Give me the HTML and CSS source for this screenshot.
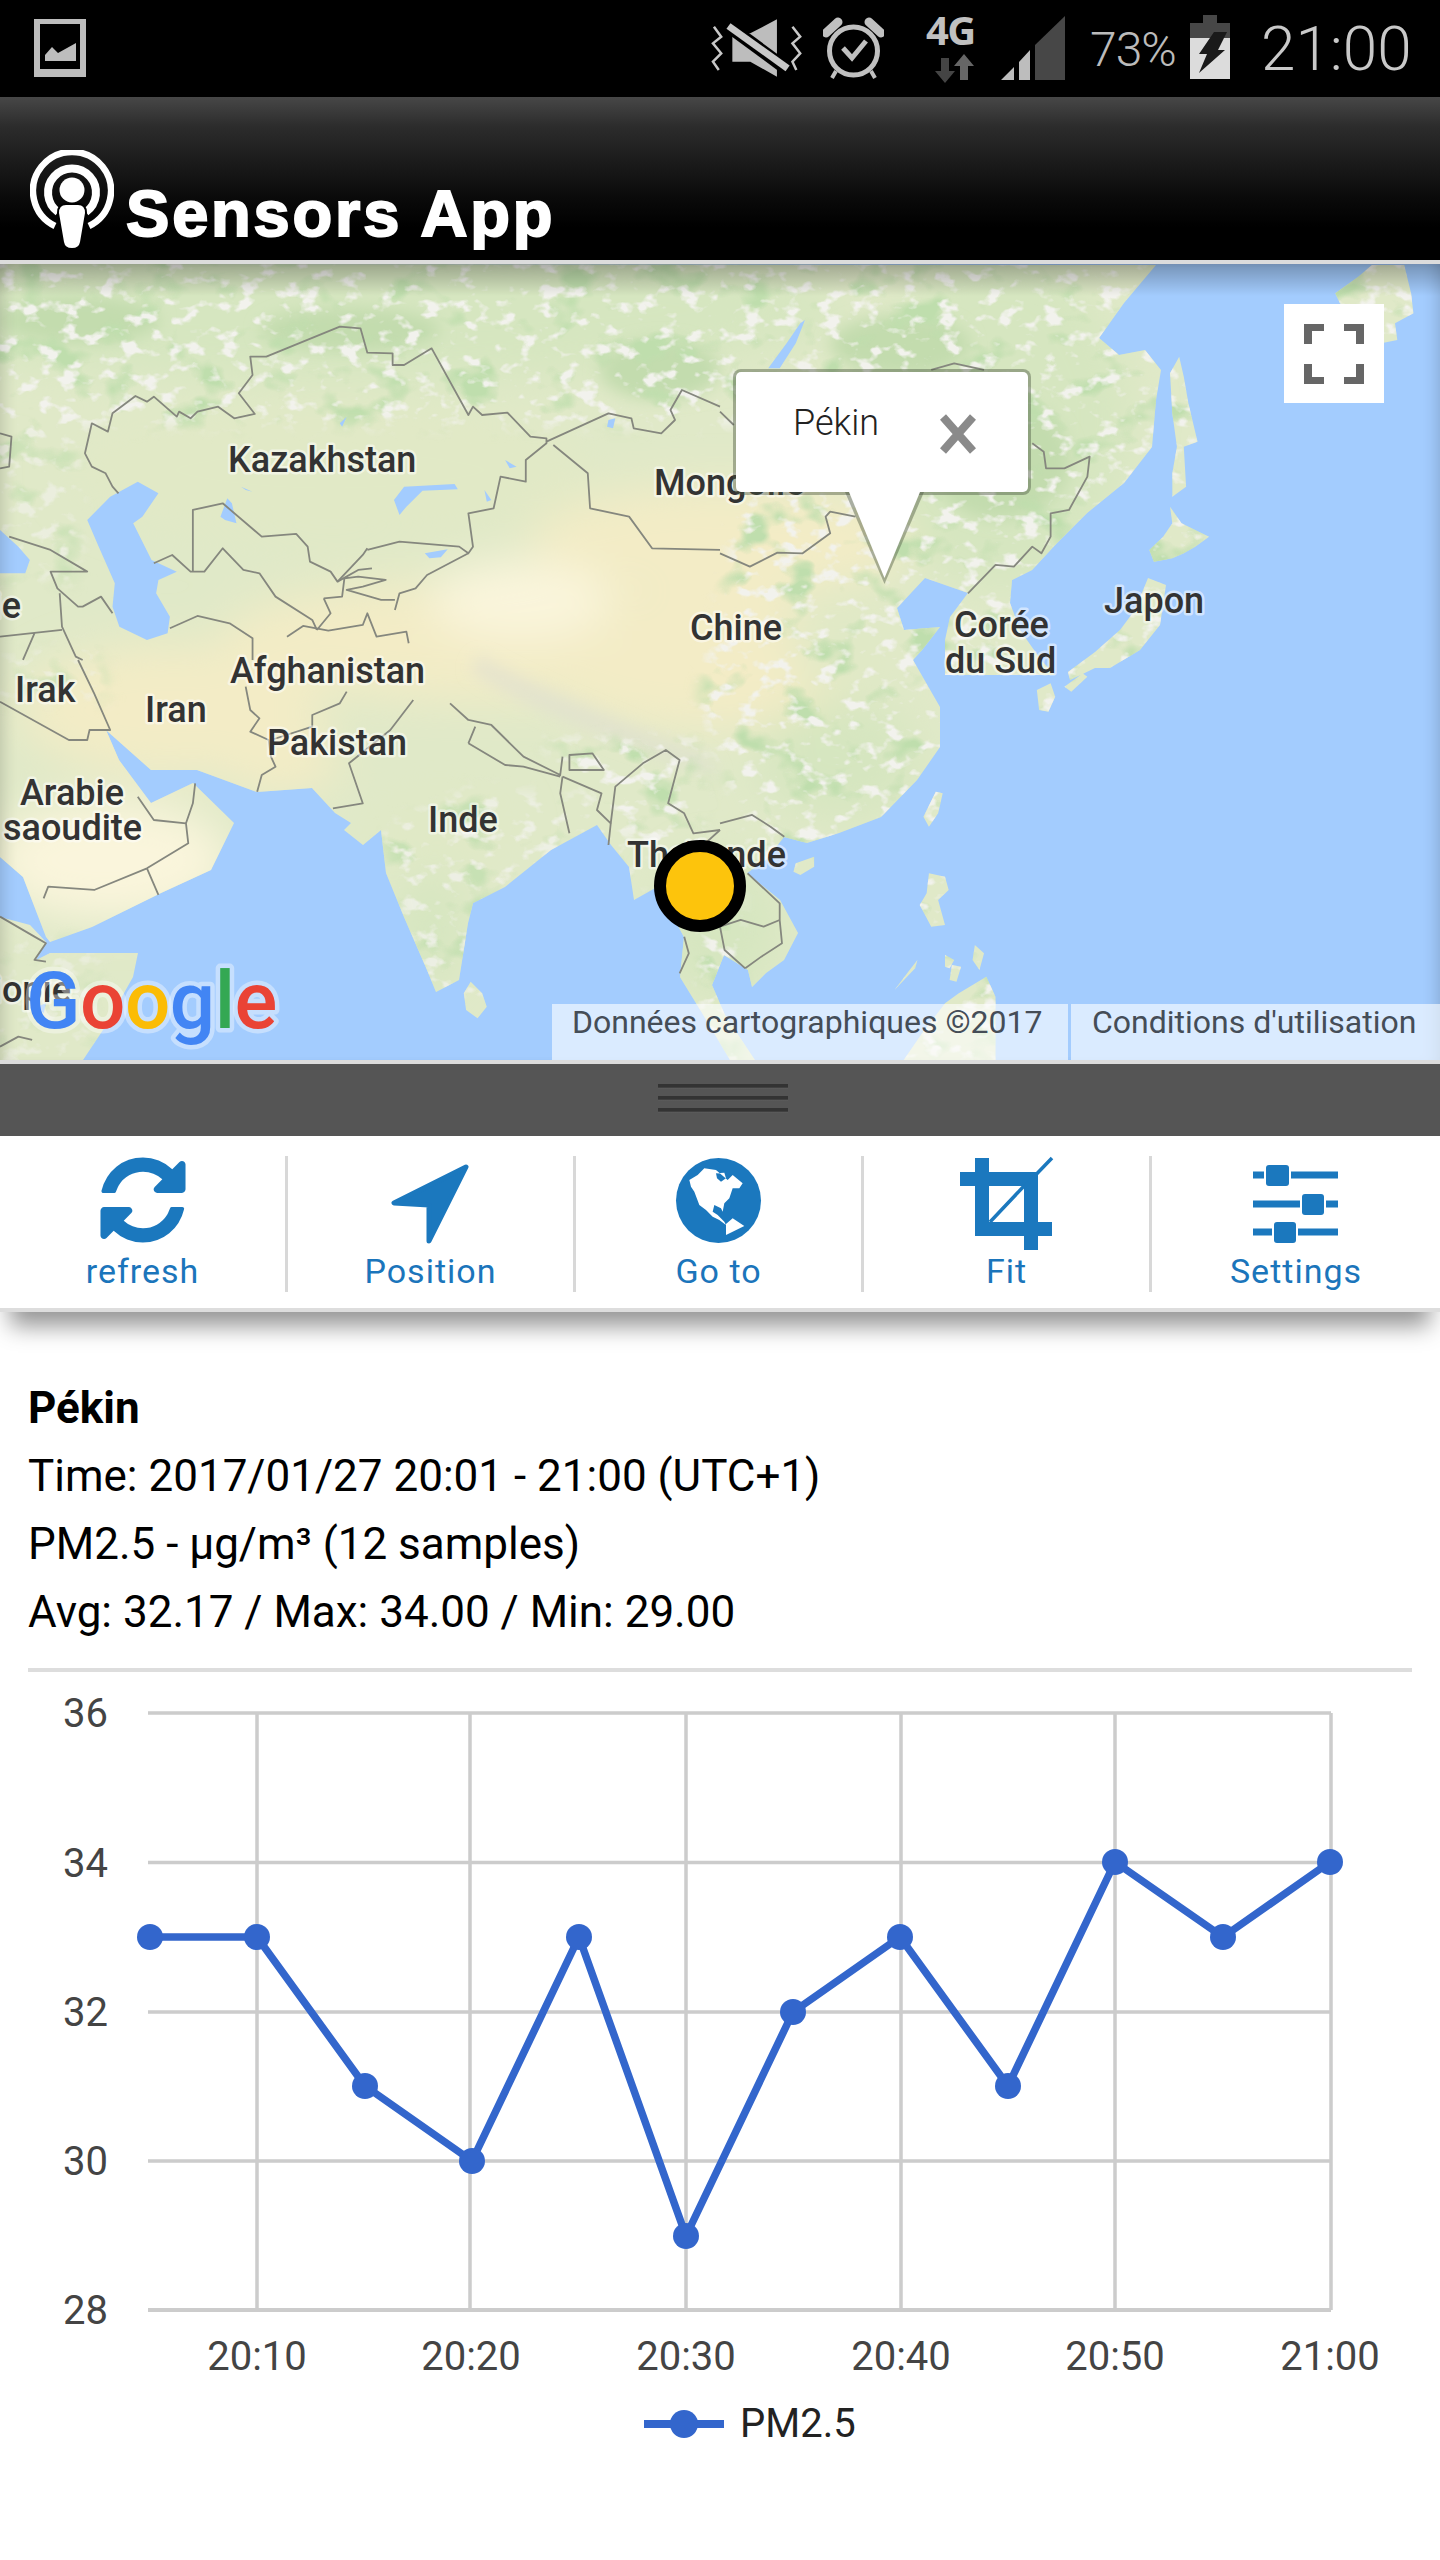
FILE: index.html
```html
<!DOCTYPE html>
<html lang="en">
<head>
<meta charset="utf-8">
<title>Sensors App</title>
<link rel="stylesheet" href="styles.css">
</head>
<body>
<div class="page">

<header class="statusbar">
  <svg class="st-gallery" viewBox="34 19 52 58" aria-hidden="true">
    <path class="st-fill" fill-rule="evenodd" d="M34 19H86V77H34ZM40 24V69H80V24Z"/>
    <path class="st-fill" d="M45 61V55L52 47L58 53L76 43V61Z"/>
  </svg>
  <div class="st-right">
    <svg class="st-mute" viewBox="711 15 93 65" aria-hidden="true">
      <g transform="translate(680,0) scale(.4847,.3333)">
        <path class="st-fill" d="M108 100H145L200 58V230L145 185H108Z"/>
        <path class="st-gap" d="M85 62L225 212"/>
        <path class="st-slash" d="M100 78L222 205"/>
        <path class="st-wave" d="M70 80L85 110L68 130L85 160L68 185L80 210"/>
        <path class="st-wave" d="M232 80L248 110L232 130L248 160L232 185L240 210"/>
      </g>
    </svg>
    <svg class="st-alarm" viewBox="823 15 61 66" aria-hidden="true">
      <circle class="st-ring" cx="853.5" cy="51" r="24"/>
      <path class="st-ear" d="M826 33L838 22M869 22L881 33"/>
      <path class="st-leg" d="M836 71L832 78M871 71L875 78"/>
      <path class="st-check" d="M843 48L852 58L866 41"/>
    </svg>
    <svg class="st-net" viewBox="927 15 52 70" aria-hidden="true">
      <text class="st-4g" x="926" y="45">4G</text>
      <path class="st-down" d="M941 58H949V71H955L945 83L935 71H941Z"/>
      <path class="st-up" d="M960 80H968V66H974L964 54L954 66H960Z"/>
    </svg>
    <svg class="st-signal" viewBox="1001 15 64 66" aria-hidden="true">
      <path class="st-fill" d="M1001 80L1014 67V80ZM1019 80V62L1030 50V80Z"/>
      <path class="st-dim" d="M1035 80V45L1065 16V80Z"/>
    </svg>
    <span class="st-pct">73%</span>
    <svg class="st-battery" viewBox="1190 15 40 65" aria-hidden="true">
      <path class="st-dim" d="M1203 15H1217V23H1230V38H1190V23H1203Z"/>
      <rect class="st-bright" x="1190" y="38" width="40" height="41"/>
      <path class="st-bolt" d="M1214 32H1227L1218 50H1225L1199 73L1207 54H1199Z"/>
    </svg>
    <span class="st-time">21:00</span>
  </div>
</header>

<div class="appbar">
  <svg class="app-logo" viewBox="30 150 84 98" aria-hidden="true">
    <path class="logo-ring logo-outer" d="M55 226A39 39 0 1 1 89 226"/>
    <path class="logo-ring logo-inner" d="M58 212A24 24 0 1 1 86 212"/>
    <circle class="logo-solid" cx="72" cy="190" r="12.5"/>
    <path class="logo-solid logo-body" d="M66 205H78Q85 205 85 213L80 242Q79 248 72 248Q65 248 64 242L59 213Q59 205 66 205Z"/>
  </svg>
  <h1 class="app-title">Sensors App</h1>
</div>

<section class="map">
  <svg class="map-canvas" viewBox="0 264 1440 796" aria-label="Map of Asia">
    <defs>
      <filter id="soft" x="-20%" y="-20%" width="140%" height="140%"><feGaussianBlur stdDeviation="22"/></filter>
      <filter id="softer" x="-20%" y="-20%" width="140%" height="140%"><feGaussianBlur stdDeviation="8"/></filter>
      <filter id="speck" x="0" y="0" width="100%" height="100%" color-interpolation-filters="sRGB">
        <feTurbulence type="fractalNoise" baseFrequency="0.05 0.07" numOctaves="3" seed="7"/>
        <feColorMatrix values="0 0 0 0 .95  0 0 0 0 .95  0 0 0 0 .93  6 0 0 0 -3.3"/>
      </filter>
      <filter id="speckg" x="0" y="0" width="100%" height="100%" color-interpolation-filters="sRGB">
        <feTurbulence type="fractalNoise" baseFrequency="0.022 0.03" numOctaves="3" seed="21"/>
        <feColorMatrix values="0 0 0 0 .75  0 0 0 0 .87  0 0 0 0 .68  0 5 0 0 -2.8"/>
      </filter>
      <clipPath id="landclip">
        <path id="mainland" d="M0 264L1156 265L1124 303L1099 338L1119 355L1145 350L1161 370L1156 400L1152 447L1124 483L1087 513L1057 543L1032 570L1012 580L1010 603L1020 630L1041 660L1055 675L945 675L945 640L950 617L968 593L925 578L897 608L904 630L940 627L922 650L913 660L917 667L940 707L940 747L917 780L881 817L839 833L807 843L784 837L766 860L747 873L780 900L798 933L784 960L766 973L752 987L748 970L724 955L712 985L725 1015L755 1060L730 1060L702 1013L680 977L684 937L657 887L634 900L629 867L611 845L597 825L551 850L505 887L473 903L468 923L459 980L436 992L427 970L404 917L386 873L381 830L363 845L344 830L351 823L335 813L312 788L257 792L197 770L151 770L106 730L119 760L151 803L193 783L234 823L211 870L161 893L92 927L50 942L46 937L23 877L0 857Z"/>
        <path d="M0 917L30 925L46 942L36 960L50 953L138 953L133 977L105 1027L83 1060L0 1060Z"/>
        <path transform="translate(720,260) scale(.4592,.3333)" d="M1000 290L1010 350L1020 430L1040 545L1010 560L1015 680L985 710L985 640L995 560L985 460L980 340Z"/>
        <path transform="translate(720,260) scale(.4592,.3333)" d="M980 740L1005 790L1065 830L1035 860L1010 880L985 895L945 905L935 870L965 830L985 790Z"/>
        <path transform="translate(720,260) scale(.4592,.3333)" d="M1420 15L1490 15L1505 100L1510 160L1470 190L1475 240L1440 250L1420 200L1350 130L1340 100L1390 50Z"/>
        <path d="M1148 578L1166 585L1160 625L1140 650L1110 668L1095 668L1070 680L1068 672L1095 652L1120 630L1135 610Z"/>
        <path transform="translate(720,660) scale(.4592,.3333)" d="M690 90L720 70L730 110L715 155L695 150Z"/>
        <path transform="translate(720,660) scale(.4592,.3333)" d="M750 80L790 40L800 50L765 95Z"/>
        <path transform="translate(720,660) scale(.4592,.3333)" d="M470 395L485 400L475 460L455 500L443 470Z"/>
        <path transform="translate(720,660) scale(.4592,.3333)" d="M165 610L205 590L205 620L175 645L160 635Z"/>
        <path transform="translate(720,660) scale(.4592,.3333)" d="M455 640L490 650L498 690L475 720L490 795L460 800L435 735L450 700Z"/>
        <path transform="translate(720,660) scale(.4592,.3333)" d="M490 885L510 900L500 925L490 920ZM555 855L575 880L565 930L550 900ZM505 915L525 920L515 965L500 960Z"/>
        <path transform="translate(720,660) scale(.4592,.3333)" d="M430 900L425 925L380 990L410 935Z"/>
        <path transform="translate(720,660) scale(.4592,.3333)" d="M490 1030L520 1000L580 950L600 1010L600 1200L400 1200L440 1120Z"/>
        <path transform="translate(0,660) scale(.4592,.3333)" d="M1025 965L1050 1000L1060 1040L1040 1075L1015 1050L1010 1000Z"/>
      </clipPath>
      <mask id="mottle-mask" maskUnits="userSpaceOnUse" x="0" y="264" width="1440" height="796">
        <g filter="url(#softer)" fill="#fff">
          <rect x="-20" y="250" width="1500" height="175"/>
          <rect x="-20" y="250" width="100" height="330" fill-opacity=".6"/>
          <path d="M760 400H1200V700L960 840L760 860L700 700Z"/>
          <path d="M540 740H700V1060H740V840L820 820V1060H1440V700H1050L900 900L660 860Z"/>
          <path d="M380 830L470 790L620 800L640 900L480 1000H420Z" fill-opacity=".75"/>
          <rect x="-20" y="940" width="120" height="130" fill-opacity=".5"/>
          <path d="M0 660L100 640L110 700H0Z" fill-opacity=".6"/>
        </g>
      </mask>
    </defs>

    <rect class="sea" x="0" y="264" width="1440" height="796"/>

    <g clip-path="url(#landclip)">
      <rect class="land" x="0" y="264" width="1440" height="796"/>
      <g filter="url(#soft)">
        <ellipse class="c-green" cx="350" cy="310" rx="500" ry="70"/>
        <ellipse class="c-green" cx="1000" cy="420" rx="130" ry="170"/>
        <ellipse class="c-kaz" cx="330" cy="470" rx="260" ry="70"/>
        <ellipse class="c-cream" cx="480" cy="640" rx="260" ry="60"/>
        <ellipse class="c-cream" cx="720" cy="540" rx="190" ry="55"/>
        <ellipse class="c-cream" cx="700" cy="660" rx="170" ry="70"/>
        <ellipse class="c-pale" cx="520" cy="600" rx="90" ry="40"/>
        <ellipse class="c-cream" cx="170" cy="710" rx="150" ry="65"/>
        <ellipse class="c-pale" cx="110" cy="860" rx="120" ry="60"/>
        <ellipse class="c-cream" cx="280" cy="760" rx="60" ry="35"/>
        <ellipse class="c-lime" cx="440" cy="830" rx="70" ry="40"/>
        <ellipse class="c-green" cx="430" cy="930" rx="35" ry="60"/>
        <ellipse class="c-green" cx="840" cy="760" rx="80" ry="60"/>
        <ellipse class="c-green" cx="720" cy="930" rx="60" ry="70"/>
        <ellipse class="c-lime" cx="850" cy="640" rx="60" ry="50"/>
      </g>
      <g filter="url(#softer)">
        <path class="c-himal" d="M470 670Q520 705 600 735T720 775L705 755Q620 722 560 695T480 655Z"/>
        <ellipse class="c-dark" cx="1000" cy="460" rx="70" ry="60"/>
        <ellipse class="c-dark" cx="660" cy="370" rx="60" ry="30"/>
        <ellipse class="c-dark" cx="80" cy="320" rx="80" ry="24"/>
        <ellipse class="c-dark" cx="350" cy="330" rx="90" ry="22"/>
        <ellipse class="c-dark" cx="900" cy="345" rx="70" ry="30"/>
      </g>
      <g mask="url(#mottle-mask)">
        <rect x="0" y="264" width="1440" height="796" filter="url(#speckg)"/>
        <rect x="0" y="264" width="1440" height="796" filter="url(#speck)"/>
      </g>
    </g>

    <g class="lakes">
      <path transform="translate(0,260) scale(.4592,.3333)" d="M300 665L345 700L310 770L290 790L330 900L385 935L345 960L340 1000L370 1070L365 1120L320 1140L260 1100L245 1040L250 970L215 860L190 780L240 710Z"/>
      <path transform="translate(0,260) scale(.4592,.3333)" d="M0 810L40 860L65 900L55 940L0 940Z"/>
      <path transform="translate(0,260) scale(.4592,.3333)" d="M858 720L880 680L990 672L997 688L920 692L885 740L870 765Z"/>
      <path transform="translate(0,260) scale(.4592,.3333)" d="M480 770L495 715L505 730L515 790L490 780ZM525 680L550 695L535 690ZM925 880L975 868L960 892L935 895ZM1100 600L1125 620L1110 625ZM1055 690L1070 720L1060 725ZM740 490L755 470L745 500ZM1325 480L1340 475L1335 505L1322 500Z"/>
      <path transform="translate(720,260) scale(.4592,.3333)" d="M185 180L165 250L130 325L105 325L145 250L175 190Z"/>
      <path transform="translate(0,660) scale(.4592,.3333)" d="M80 1040L100 1030L95 1060Z"/>
    </g>

    <g class="borders">
      <g transform="translate(0,260) scale(.4592,.3333)">
        <path d="M258 700L245 680L230 640L200 620L185 580L200 490L235 515L245 460L295 408L320 425L335 410L385 470L390 455L415 475L430 455L475 440L510 475L555 462L520 400L550 345L545 290L580 290L740 200L785 205L800 278L855 280L855 315L880 315L940 265L1020 465L1030 440L1050 465L1105 458L1155 530L1190 535L1190 550L1145 600L1145 665L1090 650L1075 745L1020 760L1030 860L1020 880L1000 860L870 845L800 870"/>
        <path d="M420 935L420 750L485 730L570 830L645 822L670 860L675 905L720 935L735 965L790 885L800 865"/>
        <path d="M335 910L375 885L415 935L445 935L485 865L530 930L565 940L600 1010L680 1080L690 1110"/>
        <path d="M370 1105L430 1068L500 1090L550 1135L550 1200"/>
        <path d="M625 1130L660 1098L715 1112L790 1095L800 1060L820 1130L885 1115L890 1150"/>
        <path d="M1020 880L930 945L905 985L870 1000L860 1050"/>
        <path d="M705 1015L745 1010L750 955L780 950L840 960L790 980L755 990L830 1020L860 1020M735 965L780 930L810 925"/>
        <path d="M690 1110L720 1060L705 1015"/>
        <path d="M1190 545L1325 460L1375 475L1380 505L1440 520L1470 480L1460 450L1485 390L1568 440"/>
        <path d="M1205 555L1280 640L1285 745L1370 770L1420 865L1568 870"/>
        <path d="M0 520L25 530L20 620L0 625"/>
        <path d="M20 830L110 870L190 935L110 935L125 985L170 1040L180 1040L220 1010L245 1060"/>
        <path d="M130 1000L135 1100L165 1190L180 1200M0 1130L135 1110M75 1120L50 1200"/>
      </g>
      <g transform="translate(720,260) scale(.4592,.3333)">
        <path d="M0 455L30 495M0 880L65 920L125 878L180 880L240 820L230 770L240 755L295 770"/>
        <path d="M460 330L510 310L575 330M680 550L705 575L710 625L750 625L805 590L800 650L760 750L720 760L720 830L700 880L680 860L640 920L600 915L540 1000"/>
      </g>
      <g transform="translate(0,660) scale(.4592,.3333)">
        <path d="M535 80L545 150L565 175L545 215L585 240L590 290L600 320L570 345L560 395"/>
        <path d="M755 95L740 130L680 165L680 200L590 240M900 120L850 210L760 310L790 430L725 445"/>
        <path d="M170 0L205 100L240 210L195 210L190 240L150 240L0 125"/>
        <path d="M300 410L335 480L405 490L410 550L320 625L205 690L105 680L95 715M320 625L345 705M425 370L420 430L405 490"/>
        <path d="M980 130L1020 180L1070 195L1140 290L1220 345L1225 290M1020 250L1035 200M1020 250L1100 315L1140 320L1220 350"/>
        <path d="M1240 285L1290 280L1315 330L1240 330Z"/>
        <path d="M1225 350L1220 400L1240 520M1225 350L1310 400L1300 450L1330 490L1325 555"/>
        <path d="M1330 490L1340 380L1400 310L1450 270L1480 300L1455 430L1490 460L1510 520L1568 510"/>
        <path d="M1490 830L1500 880L1480 940M0 770L75 830L100 850L75 900L100 905M0 1160L40 1130L70 1140"/>
      </g>
      <g transform="translate(720,660) scale(.4592,.3333)">
        <path d="M0 490L70 465L110 500L140 530M60 640L130 730L130 780L95 800L45 780L0 800M130 780L135 850L90 890L55 925M0 800L10 870L55 925"/>
        <path d="M0 510L-40 560"/>
      </g>
    </g>

    <g class="map-labels">
      <text x="228" y="472">Kazakhstan</text>
      <text x="654" y="495">Mongolie</text>
      <text x="690" y="640">Chine</text>
      <text x="1104" y="613">Japon</text>
      <text x="954" y="637">Corée</text>
      <text x="945" y="673">du Sud</text>
      <text x="230" y="683">Afghanistan</text>
      <text x="15" y="702">Irak</text>
      <text x="145" y="722">Iran</text>
      <text x="267" y="755">Pakistan</text>
      <text x="20" y="805">Arabie</text>
      <text x="3" y="840">saoudite</text>
      <text x="428" y="832">Inde</text>
      <text x="627" y="867">Thaïlande</text>
      <text class="label-end" x="71" y="1002">Éthiopie</text>
      <text class="label-end" x="21" y="618">Turquie</text>
    </g>

    <circle class="marker" cx="700" cy="886" r="40"/>

    <text class="google" x="26" y="1028"><tspan class="g-blue">G</tspan><tspan class="g-red">o</tspan><tspan class="g-yellow">o</tspan><tspan class="g-blue">g</tspan><tspan class="g-green">l</tspan><tspan class="g-red">e</tspan></text>
  </svg>

  <div class="map-shade"></div>

  <button class="fs-btn" aria-label="Fullscreen">
    <svg viewBox="0 0 60 60" class="fs-icon" aria-hidden="true">
      <path d="M0 20V0H20V7H8V20ZM40 0H60V20H52V7H40ZM0 40H8V53H20V60H0ZM52 40H60V60H40V53H52Z"/>
    </svg>
  </button>

  <div class="popup">
    <span class="popup-name">Pékin</span>
    <svg class="popup-close" viewBox="0 0 36 36" aria-hidden="true"><path d="M3 1L33 35M33 1L3 35"/></svg>
    <svg class="popup-tail" viewBox="0 0 79 92" aria-hidden="true">
      <path class="tail-shadow" d="M0 0L39.500 92L79 0Z"/>
      <path class="tail-fill" d="M4 -4H75V0L39.500 86L4 0Z"/>
    </svg>
  </div>

  <div class="attrib">
    <span class="attrib-data">Données cartographiques ©2017</span>
    <span class="attrib-terms">Conditions d'utilisation</span>
  </div>
</section>

<div class="handle">
  <span class="grip"></span><span class="grip"></span><span class="grip"></span>
</div>

<nav class="toolbar">
  <div class="tool">
    <svg class="tool-icon" viewBox="29 29 1734 1734" aria-hidden="true"><path d="M1639 1056q0 5-1 7-64 268-268 434.500t-478 166.500q-146 0-282.500-55t-243.500-157l-129 129q-19 19-45 19t-45-19-19-45v-448q0-26 19-45t45-19h448q26 0 45 19t19 45-19 45l-137 137q71 66 161 102t187 36q134 0 250-65t186-179q11-17 53-117 8-23 30-23h192q13 0 22.500 9.500t9.500 22.500zm25-800v448q0 26-19 45t-45 19h-448q-26 0-45-19t-19-45 19-45l138-138q-148-137-349-137-134 0-250 65t-186 179q-11 17-53 117-8 23-30 23h-199q-13 0-22.500-9.500t-9.500-22.500v-7q65-268 270-434.500t480-166.500q146 0 284 55.500t245 156.500l130-129q19-19 45-19t45 19 19 45z"/></svg>
    <span class="tool-label">refresh</span>
  </div>
  <div class="tool">
    <svg class="tool-icon" viewBox="0 0 96 96" aria-hidden="true"><path class="rounded" d="M83 15L11 51L46 53V89Z"/></svg>
    <span class="tool-label">Position</span>
  </div>
  <div class="tool">
    <svg class="tool-icon" viewBox="0 0 96 96" aria-hidden="true">
      <circle cx="47.500" cy="48.500" r="42.500"/>
      <g transform="translate(-10,-2) scale(.3333)">
        <path class="globe-land" fill-rule="evenodd" d="M85 90L110 75L130 55L165 60L200 90L215 75L245 100L235 115L215 115L205 145L190 160L185 185L180 175L160 165L155 185L170 195L190 215L195 225L175 210L155 200L135 180L115 165L100 125L90 110ZM165 70L190 68L195 85L180 95L168 85Z"/>
        <path class="globe-land" d="M195 222L215 205L250 228L215 245L195 255Z"/>
      </g>
    </svg>
    <span class="tool-label">Go to</span>
  </div>
  <div class="tool">
    <svg class="tool-icon" viewBox="0 0 96 96" aria-hidden="true">
      <path d="M16 6H30V20H79V70H93V84H79V98H65V84H16V34H1V20H16ZM30 34V70H65V34Z"/>
      <path class="crop-line" d="M93 6L66 34M65 34L31 70"/>
    </svg>
    <span class="tool-label">Fit</span>
  </div>
  <div class="tool">
    <svg class="tool-icon" viewBox="0 0 96 96" aria-hidden="true">
      <path d="M5 19.500H90V26.500H5ZM5 48.500H90V55.500H5ZM5 76.500H90V83.500H5Z"/>
      <rect class="knob" x="18" y="13" width="23" height="21" rx="3"/>
      <rect class="knob" x="54" y="42" width="22" height="21" rx="3"/>
      <rect class="knob" x="26" y="70" width="22" height="21" rx="3"/>
    </svg>
    <span class="tool-label">Settings</span>
  </div>
</nav>

<section class="info">
  <p class="info-line info-name">Pékin</p>
  <p class="info-line">Time: 2017/01/27 20:01 - 21:00 (UTC+1)</p>
  <p class="info-line">PM2.5 - µg/m³ (12 samples)</p>
  <p class="info-line">Avg: 32.17 / Max: 34.00 / Min: 29.00</p>
</section>
<hr class="rule">

<svg class="chart" viewBox="0 1672 1440 888" aria-label="PM2.5 chart">
  <g class="grid">
    <path d="M148 1713H1331M148 1862.500H1331M148 2012H1331M148 2161H1331"/>
    <path d="M257 1713V2310M470 1713V2310M686 1713V2310M901 1713V2310M1115 1713V2310M1331 1713V2310"/>
    <path class="axis" d="M148 2310H1331"/>
  </g>
  <g class="y-labels">
    <text x="108" y="1727">36</text>
    <text x="108" y="1877">34</text>
    <text x="108" y="2026">32</text>
    <text x="108" y="2175">30</text>
    <text x="108" y="2324">28</text>
  </g>
  <g class="x-labels">
    <text x="257" y="2370">20:10</text>
    <text x="471" y="2370">20:20</text>
    <text x="686" y="2370">20:30</text>
    <text x="901" y="2370">20:40</text>
    <text x="1115" y="2370">20:50</text>
    <text x="1330" y="2370">21:00</text>
  </g>
  <polyline class="series" points="150,1937 257,1937 365,2086 472,2161 579,1937 686,2236 793,2012 900,1937 1008,2086 1115,1862 1223,1937 1330,1862"/>
  <g class="dots">
    <circle cx="150" cy="1937" r="13"/><circle cx="257" cy="1937" r="13"/><circle cx="365" cy="2086" r="13"/>
    <circle cx="472" cy="2161" r="13"/><circle cx="579" cy="1937" r="13"/><circle cx="686" cy="2236" r="13"/>
    <circle cx="793" cy="2012" r="13"/><circle cx="900" cy="1937" r="13"/><circle cx="1008" cy="2086" r="13"/>
    <circle cx="1115" cy="1862" r="13"/><circle cx="1223" cy="1937" r="13"/><circle cx="1330" cy="1862" r="13"/>
  </g>
  <path class="legend-line" d="M644 2424H724"/>
  <circle class="legend-dot" cx="684" cy="2424" r="14"/>
  <text class="legend-text" x="740" y="2437">PM2.5</text>
</svg>

</div>
</body>
</html>
```
FILE: styles.css
```css
* { box-sizing: border-box; }
html, body { margin: 0; padding: 0; background: #fff; }
.page { width: 1440px; height: 2560px; overflow: hidden; font-family: Roboto, "Liberation Sans", sans-serif; position: relative; }

/* status bar */
.statusbar { height: 97px; background: #000; display: flex; justify-content: space-between; align-items: flex-start; padding: 0 32px 0 34px; }
.st-gallery { width: 52px; height: 58px; margin-top: 19px; }
.st-right { display: flex; align-items: flex-start; }
.st-mute { width: 93px; height: 65px; margin-top: 15px; }
.st-alarm { width: 61px; height: 66px; margin-top: 15px; margin-left: 19px; }
.st-net { width: 52px; height: 70px; margin-top: 15px; margin-left: 43px; overflow: visible; }
.st-signal { width: 64px; height: 66px; margin-top: 15px; margin-left: 22px; }
.st-pct { width: 87px; margin-left: 25px; margin-top: 22px; color: #bbb; font-size: 48px; font-weight: 300; line-height: 55px; white-space: nowrap; letter-spacing: -1px; }
.st-battery { width: 40px; height: 65px; margin-top: 15px; margin-left: 13px; }
.st-time { width: 147px; margin-left: 31px; margin-top: 14px; color: #c9c9c9; font-size: 62px; font-weight: 300; line-height: 70px; text-align: right; white-space: nowrap; }
.st-fill { fill: #bdbdbd; }
.st-dim { fill: #474747; }
.st-bright { fill: #dcdcdc; }
.st-bolt { fill: #1a1a1a; }
.st-gap { stroke: #000; stroke-width: 13px; fill: none; vector-effect: non-scaling-stroke; }
.st-slash { stroke: #c8c8c8; stroke-width: 7px; fill: none; vector-effect: non-scaling-stroke; }
.st-wave { stroke: #c8c8c8; stroke-width: 2.500px; fill: none; vector-effect: non-scaling-stroke; }
.st-ring { fill: none; stroke: #c0c0c0; stroke-width: 5px; }
.st-ear { fill: none; stroke: #c0c0c0; stroke-width: 9px; stroke-linecap: round; }
.st-leg { fill: none; stroke: #c0c0c0; stroke-width: 4px; }
.st-check { fill: none; stroke: #c0c0c0; stroke-width: 5px; }
.st-4g { font-family: "Open Sans", Roboto, sans-serif; font-weight: 700; font-size: 40px; letter-spacing: -1.500px; fill: #c0c0c0; }
.st-down { fill: #444; }
.st-up { fill: #666; }

/* app bar */
.appbar { height: 163px; background: linear-gradient(#474747 0, #2c2c2c 18%, #0a0a0a 62%, #000 80%); display: flex; align-items: flex-end; padding-left: 30px; }
.app-logo { width: 84px; height: 98px; margin-bottom: 12px; }
.logo-ring { fill: none; stroke: #fff; }
.logo-outer { stroke-width: 6.500px; }
.logo-inner { stroke-width: 8px; }
.logo-solid { fill: #fff; }
.logo-body { stroke: #000; stroke-width: 4px; paint-order: stroke; }
.app-title { margin: 0 0 15px 12px; color: #fff; font-family: "Liberation Sans", Arial, sans-serif; font-weight: 700; font-size: 65px; line-height: 63px; letter-spacing: 2.800px; -webkit-text-stroke: 2px #fff; }

/* map */
.map { height: 804px; position: relative; border-top: 4px solid #dcdcdc; border-bottom: 4px solid #dcdcdc; overflow: hidden; }
.map-canvas { display: block; width: 1440px; height: 796px; }
.sea { fill: #a3ccfe; }
.land { fill: #e0e9c8; }
.c-green { fill: #d6e6c0; }
.c-kaz { fill: #e1e9c6; }
.c-cream { fill: #f3ecc6; }
.c-pale { fill: #faf5dc; }
.c-lime { fill: #e0e9c6; }
.c-himal { fill: #dcdcd4; fill-opacity: .55; }
.c-dark { fill: #c3dcae; }
.lakes path { fill: #a3ccfe; }
.borders path { fill: none; stroke: #85877e; stroke-width: 1.800px; vector-effect: non-scaling-stroke; stroke-linejoin: round; }
.map-labels text { font-family: Roboto, sans-serif; font-weight: 500; font-size: 36px; fill: #333; stroke: rgba(255,255,255,.5); stroke-width: 5px; paint-order: stroke; stroke-linejoin: round; }
.map-labels .label-end { text-anchor: end; }
.marker { fill: #fdc40c; stroke: #000; stroke-width: 12px; }
.google { font-family: Roboto, sans-serif; font-weight: 500; font-size: 80px; letter-spacing: -.5px; stroke: rgba(255,255,255,.38); stroke-width: 9px; paint-order: stroke; stroke-linejoin: round; }
.g-blue { fill: #4285f4; }
.g-red { fill: #ea4335; }
.g-yellow { fill: #fbbc05; }
.g-green { fill: #34a853; }
.map-shade { position: absolute; inset: 0; background: linear-gradient(rgba(0,0,0,.28), rgba(0,0,0,0) 32px); box-shadow: inset 14px 0 16px -12px rgba(0,0,0,.18), inset -14px 0 16px -12px rgba(0,0,0,.18); }
.fs-btn { position: absolute; left: 1284px; top: 40px; width: 100px; height: 99px; background: #fff; border: 0; padding: 20px; display: flex; }
.fs-icon { width: 60px; height: 60px; fill: #666; }
.popup { position: absolute; left: 736px; top: 108px; width: 292px; height: 120px; background: #fff; border-radius: 5px; box-shadow: 0 0 0 3px rgba(70,80,60,.42); display: flex; }
.popup-name { position: absolute; left: 57px; top: 30px; font-size: 36px; line-height: 42px; font-weight: 300; color: #222; }
.popup-close { position: absolute; left: 204px; top: 44px; width: 36px; height: 36px; overflow: visible; }
.popup-close path { fill: none; stroke: #8a8a8a; stroke-width: 8px; }
.popup-tail { position: absolute; left: 109px; top: 0; margin-top: 120px; width: 79px; height: 92px; overflow: visible; }
.tail-shadow { fill: rgba(70,80,60,.42); }
.tail-fill { fill: #fff; }
.attrib { position: absolute; left: 552px; right: 0; bottom: 0; height: 56px; display: flex; gap: 3px; color: #454d57; font-size: 32px; line-height: 36px; }
.attrib span { background: rgba(255,255,255,.6); white-space: nowrap; display: block; }
.attrib-data { width: 516px; padding-left: 20px; }
.attrib-terms { flex: 1; padding-left: 21px; }

/* handle */
.handle { height: 72px; background: #555; display: flex; flex-direction: column; align-items: center; padding: 20px 0 0 6px; gap: 7px; }
.grip { display: block; width: 130px; height: 5px; background: linear-gradient(#333 60%, #666); }

/* toolbar */
.toolbar { height: 176px; background: #fff; display: grid; grid-template-columns: repeat(5, 1fr); padding-top: 20px; border-bottom: 4px solid #ddd; box-shadow: 0 24px 22px -10px rgba(0,0,0,.42); position: relative; }
.tool { height: 136px; display: flex; flex-direction: column; align-items: center; border-right: 3px solid #d8d8d8; }
.tool:last-child { border-right: 0; }
.tool-icon { width: 96px; height: 96px; margin-top: -4px; fill: #1b78be; overflow: visible; flex: none; }
.tool-label { margin-top: 2px; color: #1b75bb; font-size: 34px; line-height: 42px; letter-spacing: 1px; white-space: nowrap; }
.rounded { stroke: #1b78be; stroke-width: 5px; stroke-linejoin: round; }
.globe-land { fill: #fff; }
.crop-line { fill: none; stroke: #1b78be; stroke-width: 3.500px; }
.knob { stroke: #fff; stroke-width: 4px; paint-order: stroke; }

/* info */
.info { padding: 62px 28px 0; }
.info-line { margin: 0; font-size: 44px; line-height: 68px; color: #000; white-space: nowrap; }
.info-name { font-weight: 700; }
.rule { height: 4px; margin: 22px 28px 0; border: 0; background: #ddd; }

/* chart */
.chart { display: block; width: 1440px; height: 888px; }
.grid path { fill: none; stroke: #ccc; stroke-width: 3.500px; }
.grid .axis { stroke-width: 4px; }
.y-labels text { font-size: 40px; fill: #444; text-anchor: end; }
.x-labels text { font-size: 40px; fill: #444; text-anchor: middle; }
.series { fill: none; stroke: #3366cc; stroke-width: 7.500px; stroke-linejoin: round; }
.dots circle, .legend-dot { fill: #3366cc; }
.legend-line { stroke: #3366cc; stroke-width: 8px; fill: none; }
.legend-text { font-size: 40px; fill: #222; }
```
